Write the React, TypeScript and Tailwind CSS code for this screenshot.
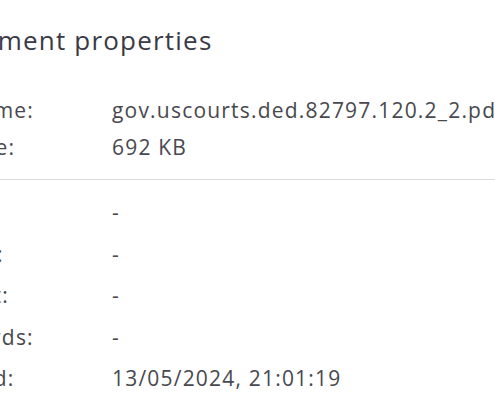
const TOP_ROWS = [
  { label: "File name:", value: "gov.uscourts.ded.82797.120.2_2.pdf" },
  { label: "File size:", value: "692 KB" },
];

const META_ROWS = [
  { label: "Title:", value: "-" },
  { label: "Author:", value: "-" },
  { label: "Subject:", value: "-" },
  { label: "Keywords:", value: "-" },
  { label: "Created:", value: "13/05/2024, 21:01:19" },
];

function Row({ label, value, tall }: { label: string; value: string; tall?: boolean }) {
  return (
    <div className={`flex items-center whitespace-nowrap ${tall ? "h-[41.5px]" : "h-[37px]"}`}>
      <span className="w-[190px] shrink-0">{label}</span>
      <span>{value}</span>
    </div>
  );
}

export default function App() {
  return (
    <div
      className="h-[400px] w-[495px] overflow-hidden bg-white text-[#48484f]"
      style={{ fontFamily: '"Open Sans", "DejaVu Sans", sans-serif' }}
    >
      <div className="-ml-[78px] w-[800px] pt-[24px]">
        <h2 className="pl-[8px] text-[26px] leading-[32px] font-normal tracking-[1.2px] text-[#3a3a46]">
          Document properties
        </h2>
        <div className="mt-[36px] text-[21px] tracking-[1.2px]">
          {TOP_ROWS.map((r) => (
            <Row key={r.label} {...r} />
          ))}
        </div>
        <div className="mt-[13px] border-t border-[#dcdcdc]" />
        <div className="mt-[12px] text-[21px] tracking-[1.2px]">
          {META_ROWS.map((r) => (
            <Row key={r.label} {...r} tall />
          ))}
        </div>
      </div>
    </div>
  );
}
